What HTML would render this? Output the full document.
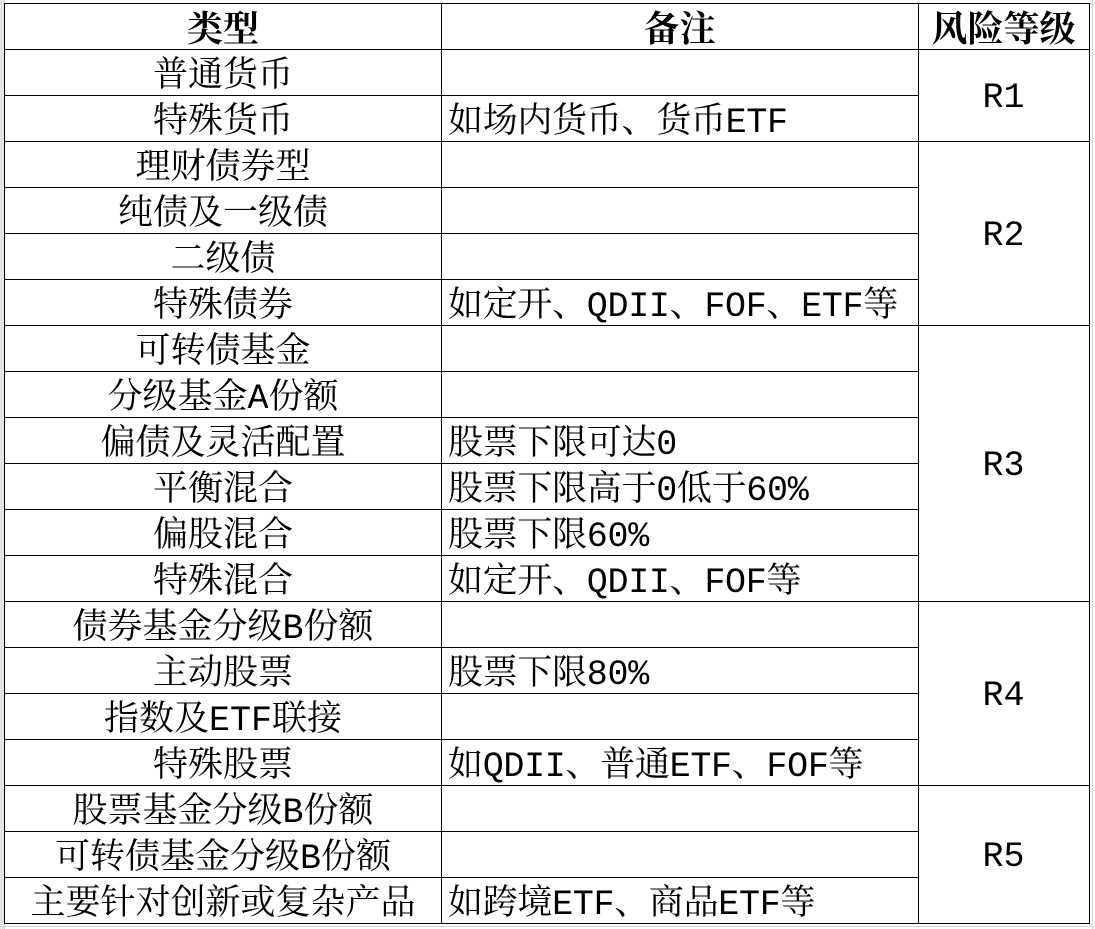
<!DOCTYPE html>
<html><head><meta charset="utf-8"><style>
body{margin:0;width:1095px;height:929px;background:#fff;position:relative;overflow:hidden;font-family:"Liberation Mono","Noto Serif CJK SC",serif;color:#000}
.gl{position:absolute;background:#d4d4d4}
.c{position:absolute;display:flex;align-items:center;box-sizing:border-box;white-space:nowrap;font-size:35px;line-height:1;padding-top:9px}
.cen{justify-content:center}
.l{justify-content:flex-start;padding-left:7px;letter-spacing:-0.3px}
.b{position:absolute;background:#000}
</style></head><body>
<div class="gl" style="left:0;top:0;width:4px;height:929px;background:#e6e6e6"></div>
<div class="gl" style="left:4px;top:0;width:1px;height:929px"></div>
<div class="gl" style="left:0;top:3px;width:1095px;height:1px"></div>
<div class="gl" style="left:1092px;top:0;width:1px;height:929px"></div>
<div class="gl" style="left:0;top:926px;width:1095px;height:1px"></div>
<div id="t"></div>
<script>
var rows=[["普通货币",""],["特殊货币","如场内货币、货币ETF"],["理财债券型",""],["纯债及一级债",""],["二级债",""],["特殊债券","如定开、QDII、FOF、ETF等"],["可转债基金",""],["分级基金A份额",""],["偏债及灵活配置","股票下限可达0"],["平衡混合","股票下限高于0低于60%"],["偏股混合","股票下限60%"],["特殊混合","如定开、QDII、FOF等"],["债券基金分级B份额",""],["主动股票","股票下限80%"],["指数及ETF联接",""],["特殊股票","如QDII、普通ETF、FOF等"],["股票基金分级B份额",""],["可转债基金分级B份额",""],["主要针对创新或复杂产品","如跨境ETF、商品ETF等"]];
var groups=[[0,2,"R1"],[2,6,"R2"],[6,12,"R3"],[12,16,"R4"],[16,19,"R5"]];
var h='';
function y(i){return 49+i*46;}
var hs='font-size:36px;font-weight:bold;padding-top:10px';
h+='<div class="c cen" style="left:5px;top:4px;width:436px;height:45px;'+hs+'">类型</div>';
h+='<div class="c cen" style="left:441px;top:4px;width:477px;height:45px;'+hs+'">备注</div>';
h+='<div class="c cen" style="left:918px;top:4px;width:171px;height:45px;'+hs+'">风险等级</div>';
rows.forEach(function(r,i){
h+='<div class="c cen" style="left:5px;top:'+(y(i)+1)+'px;width:436px;height:45px">'+r[0]+'</div>';
h+='<div class="c l" style="left:441px;top:'+(y(i)+1)+'px;width:477px;height:45px">'+r[1]+'</div>';
});
groups.forEach(function(g){
h+='<div class="c cen" style="left:918px;top:'+y(g[0])+'px;width:171px;height:'+(y(g[1])-y(g[0]))+'px;padding-top:6px">'+g[2]+'</div>';
h+='<div class="b" style="left:918px;top:'+y(g[0])+'px;width:172px;height:1px"></div>';
});
for(var i=0;i<=19;i++)h+='<div class="b" style="left:4px;top:'+y(i)+'px;width:914px;height:1px"></div>';
h+='<div class="b" style="left:4px;top:3px;width:1086px;height:1px"></div>';
h+='<div class="b" style="left:918px;top:923px;width:172px;height:1px"></div>';
[4,441,918,1089].forEach(function(x){h+='<div class="b" style="left:'+x+'px;top:3px;width:1px;height:921px"></div>';});
document.getElementById('t').innerHTML=h;
</script>
</body></html>
